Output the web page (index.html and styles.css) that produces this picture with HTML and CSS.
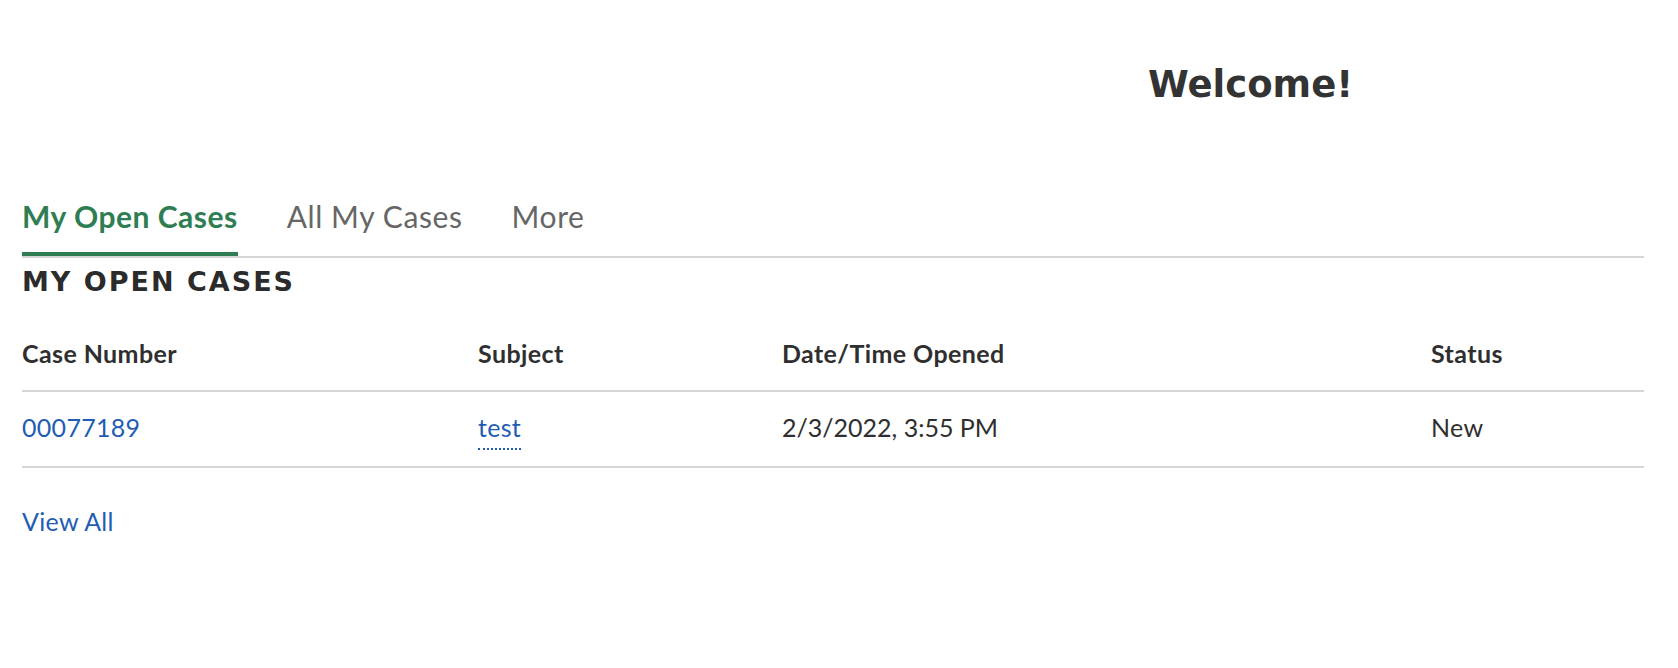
FILE: index.html
```html
<!DOCTYPE html>
<html lang="en">
<head>
<meta charset="utf-8">
<title>Welcome</title>
<link rel="stylesheet" href="styles.css">
</head>
<body>
<div class="page">
  <header class="hero">
    <h1 class="hero-title">Welcome!</h1>
  </header>

  <nav class="tabs">
    <a class="tab tab-active" href="#">My Open Cases</a>
    <a class="tab" href="#">All My Cases</a>
    <a class="tab" href="#">More</a>
  </nav>

  <section class="cases">
    <h2 class="cases-title">MY OPEN CASES</h2>
    <table class="cases-table">
      <colgroup>
        <col class="col-number">
        <col class="col-subject">
        <col class="col-date">
        <col class="col-status">
      </colgroup>
      <thead>
        <tr>
          <th>Case Number</th>
          <th>Subject</th>
          <th>Date/Time Opened</th>
          <th>Status</th>
        </tr>
      </thead>
      <tbody>
        <tr>
          <td><a class="link" href="#">00077189</a></td>
          <td><a class="link link-dotted" href="#">test</a></td>
          <td class="cell-date">2/3/2022, 3:55 PM</td>
          <td>New</td>
        </tr>
      </tbody>
    </table>
    <a class="link view-all" href="#">View All</a>
  </section>
</div>
</body>
</html>
```

FILE: styles.css
```css
html, body {
  margin: 0;
  padding: 0;
  background: #ffffff;
}

body {
  font-family: Lato, "Noto Sans", sans-serif;
  color: #2f2f2f;
}

.page {
  padding: 0 34px 0 22px;
}

/* Hero */
.hero {
  padding-top: 61px;
  padding-left: 1126px;
}

.hero-title {
  margin: 0;
  font-family: "DejaVu Sans", sans-serif;
  font-weight: 700;
  font-size: 37px;
  line-height: 48px;
  color: #333333;
}

/* Tabs */
.tabs {
  display: flex;
  gap: 49px;
  margin-top: 88px;
  border-bottom: 2px solid #d6d6d6;
}

.tab {
  display: block;
  font-family: Lato, sans-serif;
  font-size: 30px;
  font-weight: 400;
  letter-spacing: 0.6px;
  line-height: 38px;
  padding-bottom: 17px;
  border-bottom: 4px solid transparent;
  color: #666666;
  text-decoration: none;
}

.tab-active {
  font-weight: 700;
  letter-spacing: 0.5px;
  color: #2f7d52;
  border-bottom-color: #2f7d52;
}

/* Cases */
.cases-title {
  margin: 8px 0 0;
  font-family: "DejaVu Sans", sans-serif;
  font-weight: 700;
  font-size: 27px;
  letter-spacing: 2px;
  line-height: 31px;
  color: #2b2b2b;
}

.cases-table {
  width: 100%;
  border-collapse: collapse;
  table-layout: fixed;
  font-size: 25px;
  letter-spacing: 0.3px;
  line-height: 28px;
}

.col-number { width: 456px; }
.col-subject { width: 304px; }
.col-date { width: 649px; }
.col-status { width: auto; }

.cases-table th {
  text-align: left;
  font-weight: 700;
  letter-spacing: 0.4px;
  padding: 42px 0 23px;
  border-bottom: 2px solid #d6d6d6;
  color: #2f2f2f;
}

.cases-table td {
  padding: 21px 0 25px;
  border-bottom: 2px solid #d6d6d6;
  color: #2f2f2f;
}

.cases-table .cell-date {
  letter-spacing: 0;
}

.link {
  color: #1f5db3;
  text-decoration: none;
}

.link-dotted {
  display: inline-block;
  line-height: 28px;
  padding-bottom: 7px;
  border-bottom: 2px dotted #1f5db3;
  margin-bottom: -9px;
}

.view-all {
  display: inline-block;
  margin-top: 39px;
  font-size: 25px;
  letter-spacing: 0.3px;
  line-height: 28px;
}
```
